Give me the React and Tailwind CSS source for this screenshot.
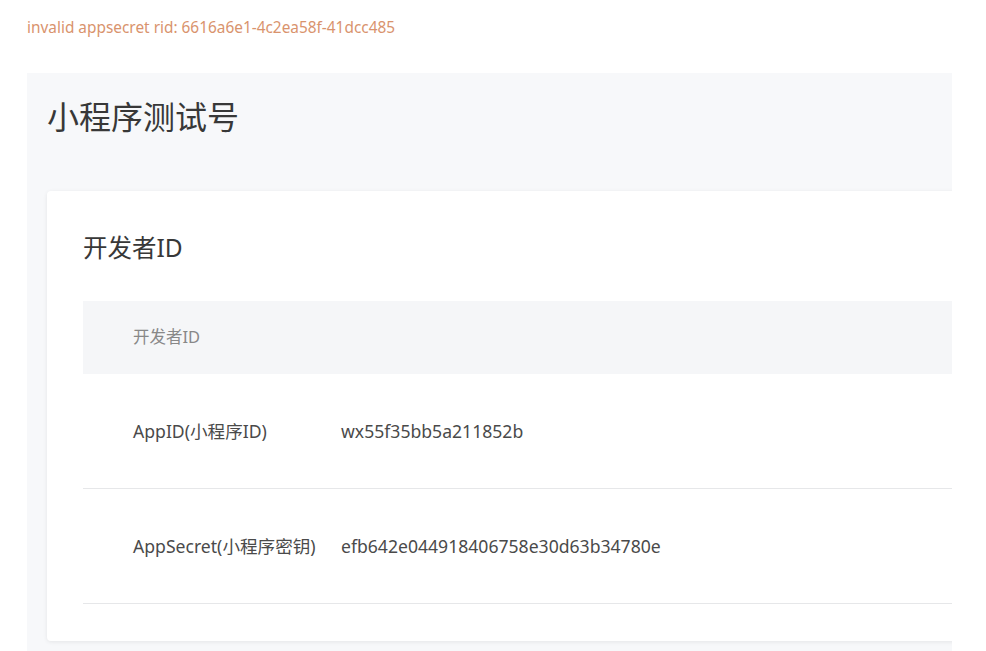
export default function App() {
  const rows = [
    { label: "AppID(小程序ID)", value: "wx55f35bb5a211852b" },
    { label: "AppSecret(小程序密钥)", value: "efb642e044918406758e30d63b34780e" },
  ];

  return (
    <div className="min-h-[651px] bg-white pl-[27px] pt-[19px] font-['Noto_Sans','Noto_Sans_CJK_SC',sans-serif]">
      <div className="text-[15.4px] leading-[18px] text-[#d9936d]">invalid appsecret rid: 6616a6e1-4c2ea58f-41dcc485</div>
      <div className="mt-[36px] h-[578px] w-[925px] overflow-hidden bg-[#f7f8fa] pl-[20px] pt-[24px]">
        <h1 className="text-[32px] leading-[40px] text-[#383838]">小程序测试号</h1>
        <div className="mt-[54px] w-[1000px] rounded-[4px] bg-white px-[36px] pb-[37px] pt-[40px] shadow-[0_1px_4px_rgba(0,0,0,0.08)]">
          <h2 className="text-[24.5px] leading-[34px] text-[#383838]">开发者ID</h2>
          <div className="mt-[36px]">
            <div className="flex h-[73px] items-center bg-[#f5f6f8] pl-[50px] text-[16.5px] text-[#888]">开发者ID</div>
            {rows.map((r) => (
              <div key={r.label} className="flex h-[115px] items-center border-b border-[#e6e7e9] pl-[50px] text-[17.6px] text-[#4a4a4a]">
                <div className="w-[208px]">{r.label}</div>
                <div>{r.value}</div>
              </div>
            ))}
          </div>
        </div>
      </div>
    </div>
  );
}
